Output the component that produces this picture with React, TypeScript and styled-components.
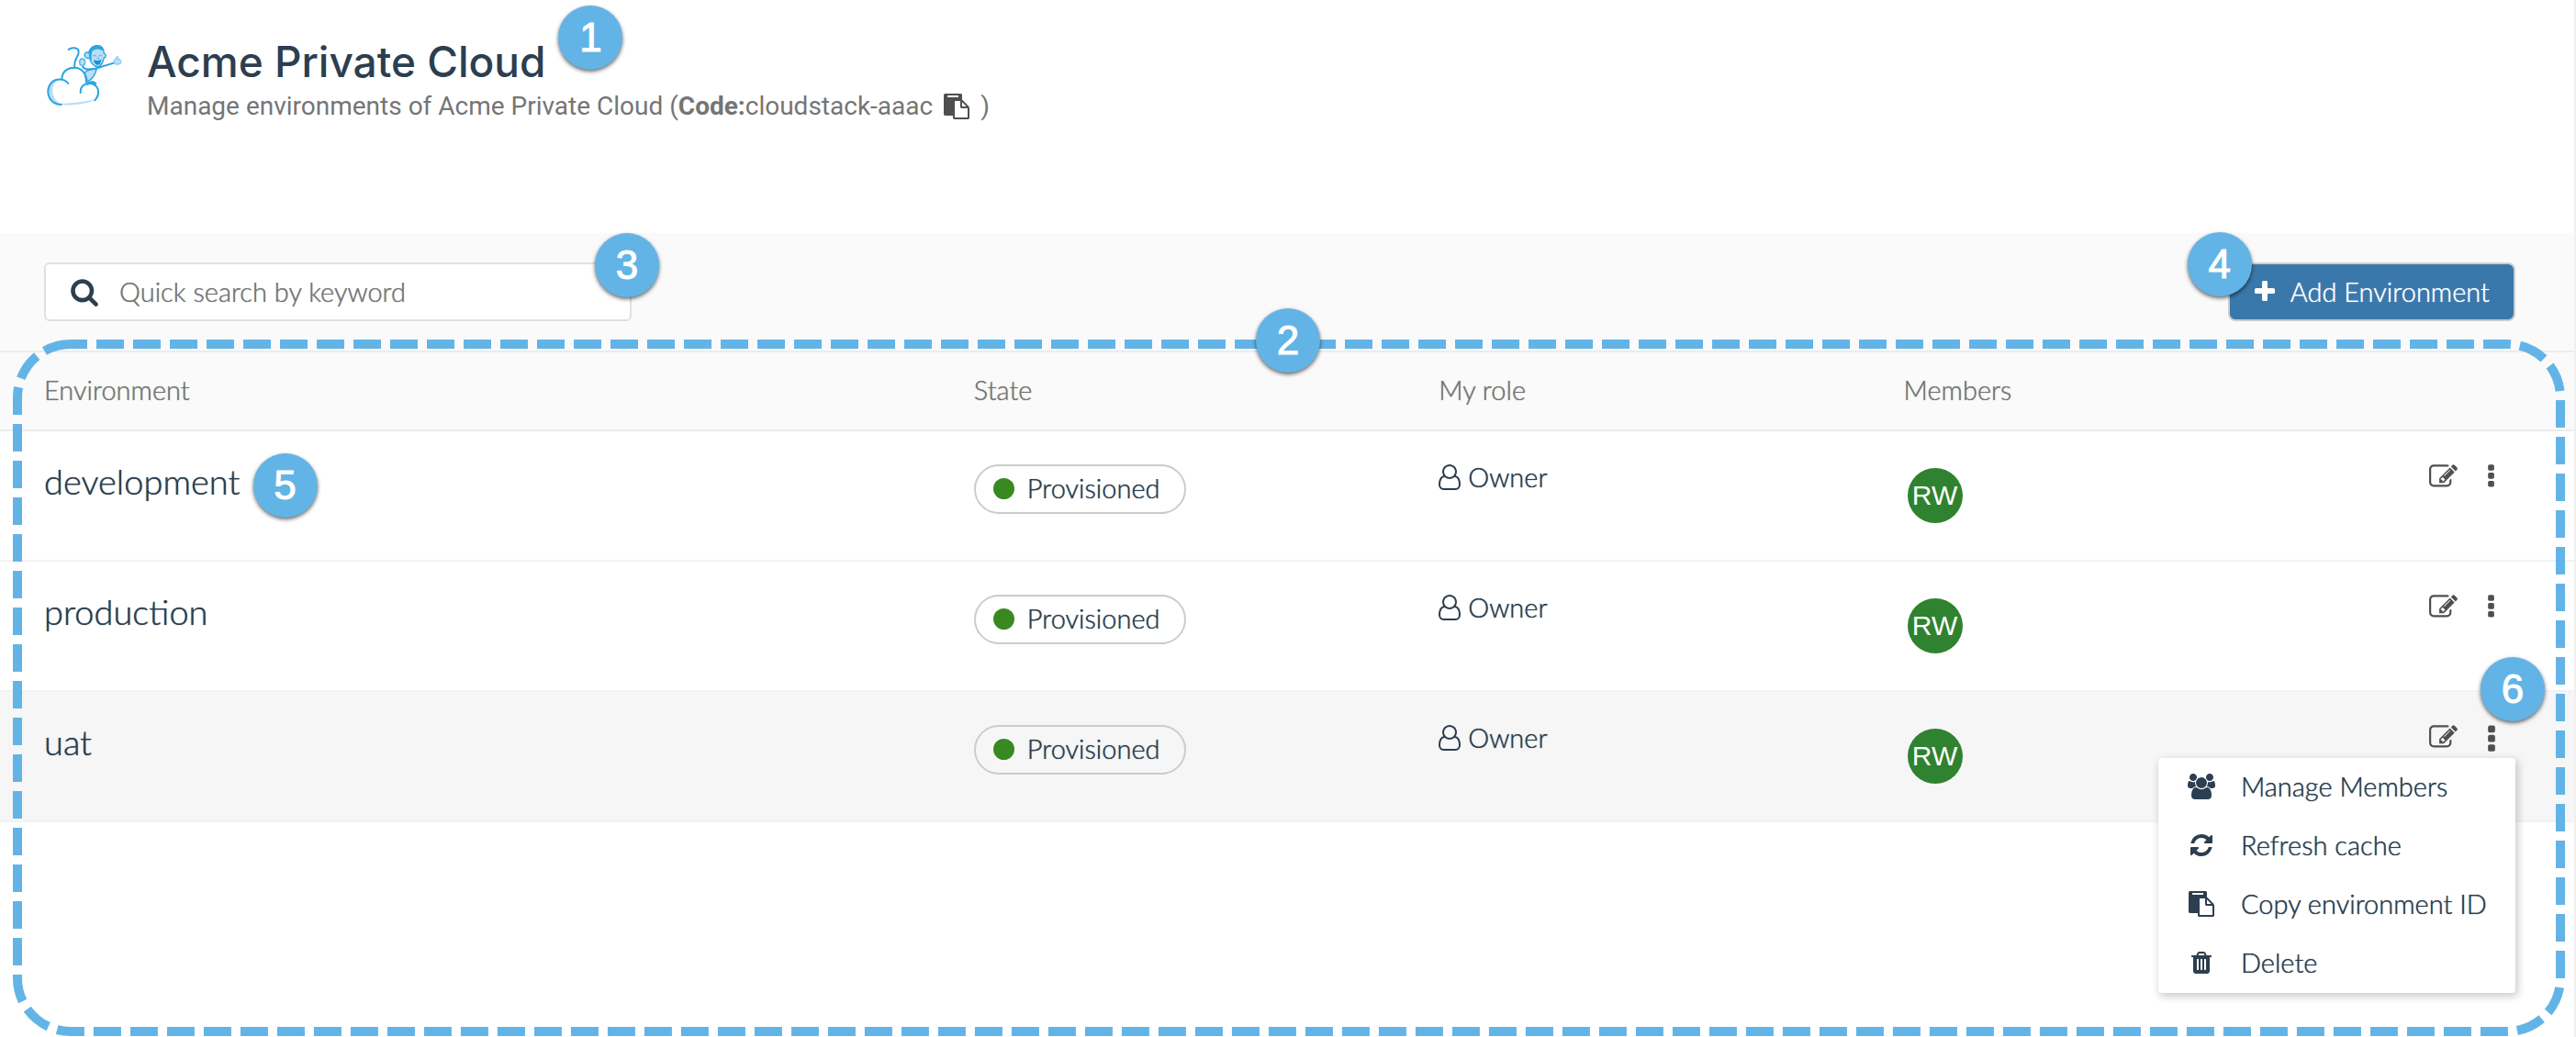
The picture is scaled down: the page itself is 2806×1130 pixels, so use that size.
import React from "react";
import styled, { createGlobalStyle, css } from "styled-components";

const ink = "#2c3e50";
const muted = "#757575";
const sky = "#63b4e6";
const line = "#ececec";

const GlobalStyle = createGlobalStyle`
  *, *::before, *::after { box-sizing: border-box; }
  body {
    margin: 0;
    background: #fff;
    color: ${ink};
    font: 300 29px/40px Lato, "Open Sans", sans-serif;
    text-shadow: 0 0 1px currentColor;
  }
  button, input { font: inherit; color: inherit; text-shadow: inherit; }
  button { cursor: pointer; }
`;

const Page = styled.div`
  display: flex;
  flex-direction: column;
  min-height: 100vh;
  border-right: 2px solid #f0f0f0;
`;

/* ---------- icons ---------- */

const Glyph = styled.svg`
  display: block;
  flex: none;
  fill: currentColor;
`;

const icons = {
  search: [1792, "M1216 832q0-185-131.5-316.5t-316.5-131.5-316.5 131.5-131.5 316.5 131.5 316.5 316.5 131.5 316.5-131.5 131.5-316.5zm512 832q0 52-38 90t-90 38q-54 0-90-38l-343-342q-179 124-399 124-143 0-273.5-55.5t-225-150-150-225-55.5-273.5 55.5-273.5 150-225 225-150 273.5-55.5 273.5 55.5 225 150 150 225 55.5 273.5q0 220-124 399l343 343q37 37 37 90z"],
  paste: [1792, "M768 1664h896v-640h-416q-40 0-68-28t-28-68v-416h-384v1152zm256-1440v-64q0-13-9.5-22.5t-22.5-9.5h-704q-13 0-22.5 9.5t-9.5 22.5v64q0 13 9.5 22.5t22.5 9.5h704q13 0 22.5-9.5t9.5-22.5zm256 672h299l-299-299v299zm512 128v672q0 40-28 68t-68 28h-960q-40 0-68-28t-28-68v-160h-544q-40 0-68-28t-28-68v-1344q0-40 28-68t68-28h1088q40 0 68 28t28 68v328q21 13 36 28l408 408q28 28 48 76t20 88z"],
  plus: [1792, "M1600 736v192q0 40-28 68t-68 28h-416v416q0 40-28 68t-68 28h-192q-40 0-68-28t-28-68v-416h-416q-40 0-68-28t-28-68v-192q0-40 28-68t68-28h416v-416q0-40 28-68t68-28h192q40 0 68 28t28 68v416h416q40 0 68 28t28 68z"],
  more: [1792, "M1088 1248v192q0 40-28 68t-68 28h-192q-40 0-68-28t-28-68v-192q0-40 28-68t68-28h192q40 0 68 28t28 68zm0-512v192q0 40-28 68t-68 28h-192q-40 0-68-28t-28-68v-192q0-40 28-68t68-28h192q40 0 68 28t28 68zm0-512v192q0 40-28 68t-68 28h-192q-40 0-68-28t-28-68v-192q0-40 28-68t68-28h192q40 0 68 28t28 68z"],
  refresh: [1792, "M1639 1056q0 5-1 7-64 268-268 434.5t-478 166.5q-146 0-282.5-55t-243.5-157l-129 129q-19 19-45 19t-45-19-19-45v-448q0-26 19-45t45-19h448q26 0 45 19t19 45-19 45l-137 137q71 66 161 102t187 36q134 0 250-65t186-179q11-17 53-117 8-23 30-23h192q13 0 22.5 9.5t9.5 22.5zm25-800v448q0 26-19 45t-45 19h-448q-26 0-45-19t-19-45 19-45l138-138q-148-137-349-137-134 0-250 65t-186 179q-11 17-53 117-8 23-30 23h-199q-13 0-22.5-9.5t-9.5-22.5v-7q65-268 270-434.5t480-166.5q146 0 284 55.5t245 156.5l130-129q19-19 45-19t45 19 19 45z"],
  trash: [1792, "M704 1376v-704q0-14-9-23t-23-9h-64q-14 0-23 9t-9 23v704q0 14 9 23t23 9h64q14 0 23-9t9-23zm256 0v-704q0-14-9-23t-23-9h-64q-14 0-23 9t-9 23v704q0 14 9 23t23 9h64q14 0 23-9t9-23zm256 0v-704q0-14-9-23t-23-9h-64q-14 0-23 9t-9 23v704q0 14 9 23t23 9h64q14 0 23-9t9-23zm-544-992h448l-48-117q-7-9-17-11h-317q-10 2-17 11zm928 32v64q0 14-9 23t-23 9h-96v948q0 83-47 143.5t-113 60.5h-832q-66 0-113-58.5t-47-141.5v-952h-96q-14 0-23-9t-9-23v-64q0-14 9-23t23-9h309l70-167q15-37 54-63t79-26h320q40 0 79 26t54 63l70 167h309q14 0 23 9t9 23z"],
  edit: [1792, "M888 1184l116-116-152-152-116 116v56h96v96h56zm440-720q-16-16-33 1l-350 350q-17 17-1 33t33-1l350-350q17-17 1-33zm80 594v190q0 119-84.5 203.5t-203.5 84.5h-832q-119 0-203.5-84.5t-84.5-203.5v-832q0-119 84.5-203.5t203.5-84.5h832q63 0 117 25 15 7 18 23 3 17-9 29l-49 49q-14 14-32 8-23-6-45-6h-832q-66 0-113 47t-47 113v832q0 66 47 113t113 47h832q66 0 113-47t47-113v-126q0-13 9-22l64-64q15-15 35-7t20 29zm-96-738l288 288-672 672h-288v-288zm444 132l-92 92-288-288 92-92q28-28 68-28t68 28l152 152q28 28 28 68t-28 68z"],
  user: [1536, "M1201 784q47 14 89.5 38t89 73 79.5 115.5 55 172 22 236.5q0 154-100 263.5t-241 109.5h-854q-141 0-241-109.5t-100-263.5q0-131 22-236.5t55-172 79.5-115.5 89-73 89.5-38q-79-125-79-272 0-104 40.5-198.5t109.5-163.5 163.5-109.5 198.5-40.5 198.5 40.5 163.5 109.5 109.5 163.5 40.5 198.5q0 147-79 272zm-433-656q-159 0-271.5 112.5t-112.5 271.5 112.5 271.5 271.5 112.5 271.5-112.5 112.5-271.5-112.5-271.5-271.5-112.5zm427 1536q88 0 150.5-71.5t62.5-173.5q0-239-78.5-377t-225.5-145q-145 127-336 127t-336-127q-147 7-225.5 145t-78.5 377q0 102 62.5 173.5t150.5 71.5h854z"],
  group: [2048, "M657 896q-162 5-265 128h-134q-82 0-138-40.5t-56-118.5q0-353 124-353 6 0 43.5 21t97.5 42.5 119 21.5q67 0 133-23-5 37-5 66 0 139 81 256zm1071 637q0 120-73 189.5t-194 69.5h-874q-121 0-194-69.5t-73-189.5q0-53 3.5-103.5t14-109 26.5-108.5 43-97.5 62-81 85.5-53.5 111.5-20q10 0 43 21.5t73 48 107 48 135 21.5 135-21.5 107-48 73-48 43-21.5q61 0 111.5 20t85.5 53.5 62 81 43 97.5 26.5 108.5 14 109 3.5 103.5zm-1024-1277q0 106-75 181t-181 75-181-75-75-181 75-181 181-75 181 75 75 181zm704 384q0 159-112.5 271.5t-271.5 112.5-271.5-112.5-112.5-271.5 112.5-271.5 271.5-112.5 271.5 112.5 112.5 271.5zm576 225q0 78-56 118.5t-138 40.5h-134q-103-123-265-128 81-117 81-256 0-29-5-66 66 23 133 23 59 0 119-21.5t97.5-42.5 43.5-21q124 0 124 353zm-128-609q0 106-75 181t-181 75-181-75-75-181 75-181 181-75 181 75 75 181z"],
} as const;

type IconName = keyof typeof icons;

function Icon({ name, size = 28 }: { name: IconName; size?: number }) {
  const [width, path] = icons[name];
  return (
    <Glyph height={size} width={(size * width) / 1792} viewBox={`0 0 ${width} 1792`} aria-hidden="true">
      <path d={path} />
    </Glyph>
  );
}

function MonkeyLogo() {
  return (
    <svg width="88" height="70" viewBox="24 50 264 210" fill="none" strokeLinecap="round" strokeLinejoin="round" role="img" aria-label="CloudStack">
      {/* cloud shading */}
      <path d="M80 168C54 166 38 184 37 208C37 232 56 250 80 250C66 242 52 228 52 206C52 186 62 172 80 168Z" fill="#b9def5" />
      <path d="M70 248C110 246 160 242 192 232C180 246 130 254 76 252Z" fill="#b9def5" />
      {/* tail */}
      <path d="M104 71C112 63 138 62 137 80C136 98 121 98 124 130" stroke="#29a5e0" strokeWidth="6" />
      {/* torso and arms */}
      <path d="M164 140C176 136 190 134 196 134C192 152 180 168 166 176C164 162 158 152 156 148Z" fill="#b9def5" stroke="#29a5e0" strokeWidth="4" />
      <path d="M150 124C154 138 168 136 190 134L254 114" stroke="#29a5e0" strokeWidth="6" />
      <path d="M166 184C174 176 184 176 192 182" stroke="#29a5e0" strokeWidth="8" />
      <ellipse cx="149" cy="112" rx="9" ry="11" fill="#b9def5" stroke="#4fb4e6" strokeWidth="4" />
      <path d="M254 104C258 102 260 98 262 93C267 94 267 99 266 103C276 102 277 110 274 117C266 121 256 120 253 116Z" fill="#b9def5" stroke="#6cc0ea" strokeWidth="3" />
      {/* head */}
      <path d="M172 96C164 80 176 62 194 58C212 56 220 68 220 84C228 86 228 96 220 98C216 114 210 126 200 128C186 126 176 114 172 96Z" fill="#b9def5" stroke="#29a5e0" strokeWidth="4" />
      <path d="M170 92C166 72 180 56 200 57C214 58 219 70 219 78C206 66 192 68 182 76C178 86 178 96 180 106C174 102 172 98 170 92Z" fill="#29a5e0" />
      <path d="M170 82C160 76 154 86 158 94C162 100 168 100 172 98" fill="#b9def5" stroke="#29a5e0" strokeWidth="4" />
      <path d="M184 92Q189 87 194 92M203 92Q208 87 213 91M197 99Q200 103 204 99" stroke="#4fb4e6" strokeWidth="3" />
      <path d="M186 104Q198 110 211 103C210 118 202 123 197 121C190 119 187 112 186 104Z" fill="#1f8fd0" />
      {/* cloud outline */}
      <path d="M103 182C88 162 56 164 43 186C28 214 42 250 80 251" stroke="#29a5e0" strokeWidth="6" />
      <path d="M82 168C82 142 104 129 124 130C146 130 162 148 162 178" stroke="#29a5e0" strokeWidth="6" />
      <path d="M143 212C142 190 158 180 174 182C200 184 212 212 190 237" stroke="#29a5e0" strokeWidth="6" />
    </svg>
  );
}

/* ---------- numbered callouts ---------- */

const Anchor = styled.div`
  position: relative;
  display: inline-flex;
`;

const Callout = styled.span<{ $place: "title" | "name" | "corner" | "top" | "before" | "above" }>`
  position: absolute;
  z-index: 3;
  width: 70px;
  height: 70px;
  border-radius: 50%;
  background: ${sky};
  box-shadow: 0 2px 4px rgba(0, 0, 0, 0.6);
  color: #fff;
  font: 400 44px/70px "Liberation Sans", Arial, sans-serif;
  text-align: center;
  text-shadow: none;
  -webkit-text-stroke: 1px #fff;
  ${({ $place }) =>
    ({
      title: css`left: calc(100% + 14px); top: -34px;`,
      name: css`left: calc(100% + 14px); top: -10px;`,
      corner: css`right: -32px; top: -34px;`,
      top: css`left: calc(50% - 34px); top: -48px;`,
      before: css`left: -44px; top: -33px;`,
      above: css`right: -32px; top: -72px;`,
    })[$place]}
`;

/* ---------- header ---------- */

const Header = styled.header`
  display: flex;
  align-items: flex-start;
  gap: 24px;
  height: 254px;
  padding: 40px 48px;
  text-shadow: none;
`;

const LogoBox = styled.div`
  display: flex;
  padding-top: 7px;
`;

const Title = styled.h1`
  position: relative;
  width: max-content;
  margin: 0;
  font: 500 46px/54px Inter, sans-serif;
`;

const Subtitle = styled.p`
  display: flex;
  align-items: center;
  margin: 4px 0 0;
  color: ${muted};
  font: 400 28px/36px Roboto, sans-serif;
  white-space: pre;
`;

const CopyCode = styled.button`
  display: flex;
  margin: 0 12px;
  padding: 0;
  border: 0;
  background: none;
  color: #4f4f4f;
`;

/* ---------- toolbar ---------- */

const Toolbar = styled.div`
  display: flex;
  align-items: center;
  justify-content: space-between;
  padding: 32px 64px 32px 48px;
  border-bottom: 2px solid ${line};
  background: #fafafa;
`;

const SearchBox = styled.label`
  position: relative;
  display: flex;
  align-items: center;
  gap: 22px;
  width: 640px;
  height: 64px;
  padding: 0 26px;
  border: 2px solid #e0e0e0;
  border-radius: 6px;
  background: #fff;
`;

const SearchInput = styled.input`
  flex: 1;
  min-width: 0;
  padding: 0;
  border: 0;
  outline: 0;
  background: none;
  &::placeholder { color: ${muted}; opacity: 1; }
`;

const AddButton = styled.button`
  display: flex;
  align-items: center;
  gap: 14px;
  height: 64px;
  padding: 0 26px 0 24px;
  border: 2px solid #ccc;
  border-radius: 8px;
  background: #3a78ab;
  color: #fff;
`;

/* ---------- table ---------- */

const Content = styled.main`
  position: relative;
  flex: 1;
`;

const Outline = styled.svg`
  position: absolute;
  z-index: 2;
  left: 19px;
  top: -9px;
  width: calc(100% - 34px);
  height: calc(100% + 3px);
  overflow: visible;
  pointer-events: none;
`;

const Table = styled.table`
  display: block;
`;

const Section = styled.tbody`
  display: block;
`;

const Row = styled.tr<{ $head?: boolean; $active?: boolean }>`
  display: grid;
  grid-template-columns: 2fr 1fr 1fr 1fr 160px;
  height: ${({ $head }) => ($head ? 86 : 142)}px;
  padding: ${({ $head }) => ($head ? 21 : 34)}px 64px 0 48px;
  border-bottom: 2px solid ${({ $head }) => ($head ? line : "#f2f2f2")};
  background: ${({ $head, $active }) => ($head ? "#fafafa" : $active ? "#f6f6f6" : "#fff")};
`;

const HeadCell = styled.th`
  padding: 0;
  color: ${muted};
  font-weight: 300;
  text-align: left;
`;

const Cell = styled.td`
  padding: 0;
`;

const Name = styled.span`
  font-size: 38px;
  line-height: 40px;
`;

const State = styled.span`
  display: inline-flex;
  align-items: center;
  gap: 14px;
  height: 54px;
  padding: 0 26px 2px 19px;
  border: 2px solid #ccc;
  border-radius: 27px;
  margin-top: 2px;
  &::before {
    content: "";
    width: 23px;
    height: 23px;
    border-radius: 50%;
    background: #388920;
  }
`;

const Role = styled.span`
  display: flex;
  align-items: center;
  gap: 8px;
  line-height: 32px;
`;

const Avatar = styled.span`
  display: grid;
  place-items: center;
  width: 60px;
  height: 60px;
  margin: 6px 0 0 4px;
  border-radius: 50%;
  background: #2f822f;
  color: #fff;
  font: 400 30px/60px "Liberation Sans", sans-serif;
  text-shadow: none;
`;

const Actions = styled.div`
  position: relative;
  display: flex;
  justify-content: flex-end;
`;

const ActionButton = styled.button`
  display: grid;
  place-items: center;
  width: 52px;
  height: 28px;
  padding: 0;
  border: 0;
  background: none;
  color: #4f4f4f;
`;

const Menu = styled.ul`
  position: absolute;
  z-index: 1;
  top: 38px;
  right: 0;
  width: 389px;
  margin: 0;
  padding: 0;
  border-radius: 4px;
  background: #fff;
  box-shadow: 2px 3px 8px 1px rgba(0, 0, 0, 0.2);
  list-style: none;
`;

const MenuItem = styled.button`
  display: grid;
  grid-template-columns: 32px 1fr;
  align-items: center;
  gap: 27px;
  width: 100%;
  height: 64px;
  padding: 0 20px 2px 31px;
  border: 0;
  background: none;
  text-align: left;
  white-space: nowrap;
  svg { justify-self: center; }
`;

const menu: { icon: IconName; label: string }[] = [
  { icon: "group", label: "Manage Members" },
  { icon: "refresh", label: "Refresh cache" },
  { icon: "paste", label: "Copy environment ID" },
  { icon: "trash", label: "Delete" },
];

const environments = [
  { name: "development", callout: 5 },
  { name: "production" },
  { name: "uat", open: true },
];

export default function App() {
  return (
    <Page>
      <GlobalStyle />
      <Header>
        <LogoBox>
          <MonkeyLogo />
        </LogoBox>
        <div>
          <Title>
            Acme Private Cloud
            <Callout $place="title">1</Callout>
          </Title>
          <Subtitle>
            Manage environments of Acme Private Cloud (<strong>Code:</strong>cloudstack-aaac
            <CopyCode type="button" aria-label="Copy code">
              <Icon name="paste" />
            </CopyCode>
            )
          </Subtitle>
        </div>
      </Header>

      <Toolbar>
        <SearchBox>
          <Icon name="search" size={32} />
          <SearchInput type="search" placeholder="Quick search by keyword" aria-label="Quick search by keyword" />
          <Callout $place="corner">3</Callout>
        </SearchBox>
        <Anchor>
          <AddButton type="button">
            <Icon name="plus" />
            Add Environment
          </AddButton>
          <Callout $place="before">4</Callout>
        </Anchor>
      </Toolbar>

      <Content>
        <Outline aria-hidden="true">
          <rect width="100%" height="100%" rx="58" fill="none" stroke={sky} strokeWidth="10" strokeDasharray="30 10" strokeDashoffset="12" />
        </Outline>
        <Callout $place="top">2</Callout>
        <Table>
          <Section as="thead">
            <Row $head>
              <HeadCell scope="col">Environment</HeadCell>
              <HeadCell scope="col">State</HeadCell>
              <HeadCell scope="col">My role</HeadCell>
              <HeadCell scope="col">Members</HeadCell>
              <HeadCell as="td" />
            </Row>
          </Section>
          <Section>
            {environments.map(({ name, callout, open }) => (
              <Row key={name} $active={open}>
                <Cell>
                  <Anchor>
                    <Name>{name}</Name>
                    {callout && <Callout $place="name">{callout}</Callout>}
                  </Anchor>
                </Cell>
                <Cell>
                  <State>Provisioned</State>
                </Cell>
                <Cell>
                  <Role>
                    <Icon name="user" />
                    Owner
                  </Role>
                </Cell>
                <Cell>
                  <Avatar>RW</Avatar>
                </Cell>
                <Cell>
                  <Actions>
                    <ActionButton type="button" aria-label={`Edit ${name}`}>
                      <Icon name="edit" size={31} />
                    </ActionButton>
                    <ActionButton type="button" aria-label={`More actions for ${name}`} aria-expanded={!!open}>
                      <Icon name="more" size={open ? 36 : 31} />
                    </ActionButton>
                    {open && <Callout $place="above">6</Callout>}
                    {open && (
                      <Menu>
                        {menu.map(({ icon, label }) => (
                          <li key={label}>
                            <MenuItem type="button">
                              <Icon name={icon} />
                              {label}
                            </MenuItem>
                          </li>
                        ))}
                      </Menu>
                    )}
                  </Actions>
                </Cell>
              </Row>
            ))}
          </Section>
        </Table>
      </Content>
    </Page>
  );
}
